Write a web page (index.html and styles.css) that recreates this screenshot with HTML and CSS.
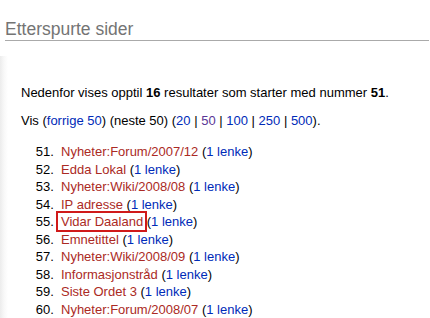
FILE: index.html
```html
<!DOCTYPE html>
<html lang="no">
<head>
<meta charset="utf-8">
<title>Etterspurte sider</title>
<link rel="stylesheet" href="styles.css">
</head>
<body>
<h1 class="title">Etterspurte sider</h1>
<div class="content">
  <p class="para">Nedenfor vises opptil <b>16</b> resultater som starter med nummer <b>51</b>.</p>
  <p class="para">Vis (<a class="lnk" href="#">forrige 50</a>) (neste 50) (<a class="lnk" href="#">20</a> | <a class="lnk visited" href="#">50</a> | <a class="lnk" href="#">100</a> | <a class="lnk" href="#">250</a> | <a class="lnk" href="#">500</a>).</p>
  <ol class="list" start="51">
    <li><a class="new" href="#">Nyheter:Forum/2007/12</a> (<a class="lnk" href="#">1 lenke</a>)</li>
    <li><a class="new" href="#">Edda Lokal</a> (<a class="lnk" href="#">1 lenke</a>)</li>
    <li><a class="new" href="#">Nyheter:Wiki/2008/08</a> (<a class="lnk" href="#">1 lenke</a>)</li>
    <li><a class="new" href="#">IP adresse</a> (<a class="lnk" href="#">1 lenke</a>)</li>
    <li><a class="new marked" href="#">Vidar Daaland</a> (<a class="lnk" href="#">1 lenke</a>)</li>
    <li><a class="new" href="#">Emnetittel</a> (<a class="lnk" href="#">1 lenke</a>)</li>
    <li><a class="new" href="#">Nyheter:Wiki/2008/09</a> (<a class="lnk" href="#">1 lenke</a>)</li>
    <li><a class="new" href="#">Informasjonstråd</a> (<a class="lnk" href="#">1 lenke</a>)</li>
    <li><a class="new" href="#">Siste Ordet 3</a> (<a class="lnk" href="#">1 lenke</a>)</li>
    <li><a class="new" href="#">Nyheter:Forum/2008/07</a> (<a class="lnk" href="#">1 lenke</a>)</li>
  </ol>
</div>
</body>
</html>
```
FILE: styles.css
```css
html, body {
  margin: 0;
  background: #fff;
}
body {
  font-family: "Liberation Sans", Arial, sans-serif;
  color: #000;
  overflow: hidden;
}
.title {
  margin: 0 1px 0 5px;
  padding: 19px 0 1px;
  font-size: 17.5px;
  line-height: 20px;
  font-weight: normal;
  color: #747474;
  border-bottom: 1px solid #aaa;
}
.content {
  margin-top: 15px;
  padding: 28px 0 0 21px;
  font-size: 13px;
  line-height: 17.5px;
  background: linear-gradient(to right, #ececec, #f8f8f8 4px, #fff 8px);
}
.para {
  margin: 0 0 10px;
}
.list {
  margin: 14px 0 0;
  padding-left: 40px;
}
.list li::marker {
  content: counter(list-item) ".  ";
}
a {
  text-decoration: none;
}
.lnk {
  color: #002bb8;
}
.lnk.visited {
  color: #5a3696;
}
.new {
  color: #ab2a24;
}
.marked {
  position: relative;
}
.marked::after {
  content: "";
  position: absolute;
  left: -5px;
  right: -4px;
  top: -3px;
  bottom: -3px;
  border: 2px solid #d01a1a;
}
```
